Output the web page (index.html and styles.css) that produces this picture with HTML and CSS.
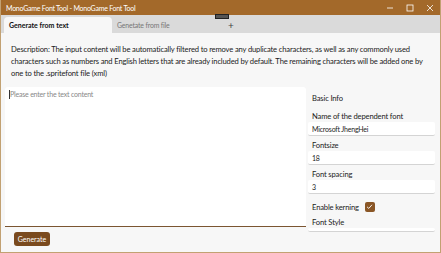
FILE: index.html
```html
<!DOCTYPE html>
<html lang="en">
<head>
    <meta charset="UTF-8">
    <title>MonoGame Font Tool - MonoGame Font Tool</title>
    <link rel="stylesheet" href="styles.css">
</head>
<body>
    <div class="window">
        <div class="titlebar">
            <span class="title">MonoGame Font Tool - MonoGame Font Tool</span>
            <div class="controls">
                <svg width="10" height="10" viewBox="0 0 10 10"><path d="M2 5h6" stroke="#fff" stroke-width="0.8"/></svg>
                <svg width="10" height="10" viewBox="0 0 10 10"><rect x="2" y="2" width="6" height="6" fill="none" stroke="#fff" stroke-width="0.8"/></svg>
                <svg width="10" height="10" viewBox="0 0 10 10"><path d="M2 2l6 6M8 2l-6 6" stroke="#fff" stroke-width="0.8"/></svg>
            </div>
        </div>
        <div class="tabs">
            <div class="tab active">Generate from text</div>
            <div class="tab">Genetate from file</div>
            <div class="add">+</div>
            <div class="grip"></div>
        </div>
        <div class="content">
            <p class="desc">Description: The input content will be automatically filtered to remove any duplicate characters, as well as any commonly used characters such as numbers and English letters that are already included by default. The remaining characters will be added one by one to the .spritefont file (xml)</p>
            <div class="main">
                <div class="editor">
                    <div class="textbox"><span class="caret"></span>Please enter the text content</div>
                    <button class="btn">Generate</button>
                </div>
                <div class="side">
                    <div class="section">Basic Info</div>
                    <label>Name of the dependent font</label>
                    <div class="field">Microsoft JhengHei</div>
                    <label>Fontsize</label>
                    <div class="field">18</div>
                    <label>Font spacing</label>
                    <div class="field">3</div>
                    <div class="check-row">
                        <span>Enable kerning</span>
                        <span class="checkbox">
                            <svg width="9" height="9" viewBox="0 0 9 9"><path d="M2 4.8l1.8 1.6L7 2.8" fill="none" stroke="#fff" stroke-width="0.9"/></svg>
                        </span>
                    </div>
                    <label>Font Style</label>
                    <div class="field cut"></div>
                </div>
            </div>
        </div>
    </div>
</body>
</html>
```

FILE: styles.css
```css
body {
    margin: 0;
    font-family: Lato, "Noto Sans", sans-serif;
    color: #1c1c1c;
}
.window {
    width: 441px;
    height: 253px;
    box-sizing: border-box;
    border: 1px solid #c2a172;
    border-top: none;
    display: flex;
    flex-direction: column;
    background: #f7f7f7;
    position: relative;
    overflow: hidden;
}
.titlebar {
    height: 15px;
    background: #a3692a;
    display: flex;
    align-items: center;
    justify-content: space-between;
    padding-left: 5px;
    color: #fff;
}
.title {
    font-size: 7px;
    letter-spacing: -0.25px;
}
.controls {
    display: flex;
    gap: 10px;
    padding-right: 5px;
}
.tabs {
    height: 18px;
    background: #dadada;
    display: flex;
    align-items: flex-end;
    padding-left: 3px;
    font-size: 6.9px;
    letter-spacing: -0.15px;
}
.tab {
    height: 16px;
    width: 108px;
    box-sizing: border-box;
    padding-left: 5px;
    display: flex;
    align-items: center;
    color: #777;
}
.tab.active {
    background: #f7f7f7;
    color: #111;
    border-radius: 4px 4px 0 0;
    font-weight: 700;
    font-size: 7px;
    letter-spacing: 0;
}
.add {
    height: 16px;
    display: flex;
    align-items: center;
    margin-left: 8px;
    font-size: 10px;
    color: #444;
}
.grip {
    position: absolute;
    left: 214px;
    top: 14px;
    width: 12px;
    height: 3px;
    background: #555;
    border: 1px solid #222;
}
.content {
    flex: 1;
    display: flex;
    flex-direction: column;
    padding: 10px 0 0 4px;
}
.desc {
    margin: 0 6px 8px 6px;
    font-size: 7.6px;
    letter-spacing: -0.15px;
    line-height: 12px;
    color: #222;
}
.main {
    flex: 1;
    display: flex;
}
.editor {
    width: 301px;
    display: flex;
    flex-direction: column;
}
.textbox {
    height: 140px;
    box-sizing: border-box;
    background: #fff;
    border-radius: 3px 3px 0 0;
    border-bottom: 1px solid #7b5531;
    padding: 3px 4px;
    font-size: 7px;
    letter-spacing: -0.2px;
    color: #888;
    display: flex;
    align-items: flex-start;
}
.caret {
    width: 1px;
    height: 9px;
    background: #333;
}
.btn {
    align-self: flex-start;
    margin: 5px 0 0 9px;
    height: 14px;
    width: 36px;
    padding: 0;
    border: none;
    border-radius: 3px;
    background: #7a4a1e;
    color: #fff;
    font-family: inherit;
    font-size: 7px;
}
.side {
    flex: 1;
    padding: 6px 5px 0 2px;
    display: flex;
    flex-direction: column;
    font-size: 7.6px;
    letter-spacing: -0.15px;
}
.section {
    height: 12px;
    margin-bottom: 6px;
    padding-left: 4px;
}
label {
    height: 11px;
    display: block;
    padding-left: 4px;
}
.field {
    height: 14px;
    box-sizing: border-box;
    background: #fff;
    border-bottom: 1px solid #d4d4d4;
    border-radius: 2px;
    padding: 3px 4px 0;
    font-size: 7px;
    letter-spacing: -0.2px;
    margin-bottom: 4px;
}
.check-row {
    height: 17px;
    display: flex;
    align-items: center;
    gap: 6px;
    margin-bottom: 2px;
    padding-left: 4px;
}
.checkbox {
    width: 10px;
    height: 10px;
    border-radius: 2px;
    background: #8a5626;
    display: flex;
    align-items: center;
    justify-content: center;
}
.field.cut {
    height: 3px;
}
```
